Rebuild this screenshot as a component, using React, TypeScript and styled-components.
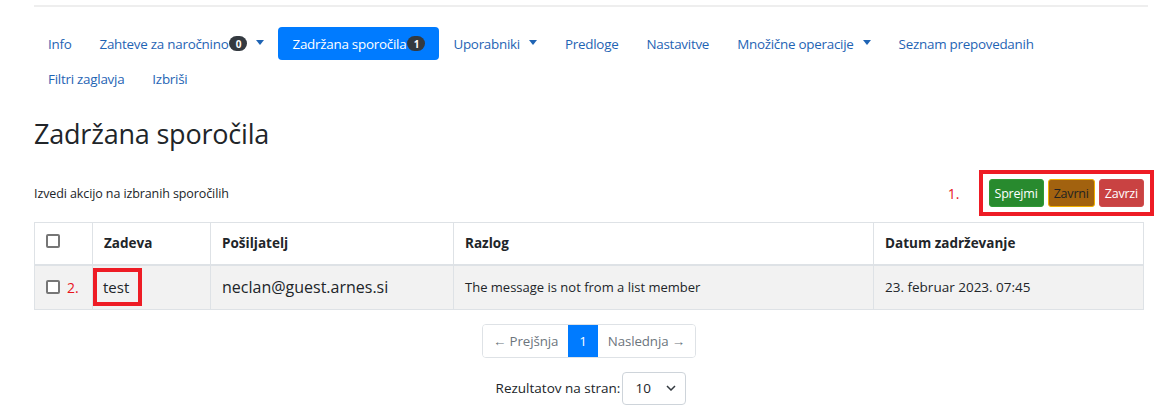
import React from "react";
import styled, { createGlobalStyle } from "styled-components";

const GlobalStyle = createGlobalStyle`
  body {
    margin: 0;
    background: #fff;
    font-family: "Open Sans", "Noto Sans", Arial, sans-serif;
    color: #212529;
  }
`;

const Page = styled.div`
  padding: 0 28px 0 34px;
`;

const TopRule = styled.div`
  height: 5px;
  border-bottom: 2px solid #eeeeee;
  margin-right: -4px;
`;

const Nav = styled.ul`
  display: flex;
  flex-wrap: wrap;
  list-style: none;
  margin: 0;
  padding: 20px 0 0;
  row-gap: 2px;
`;

const NavLink = styled.a<{ $active?: boolean }>`
  display: flex;
  align-items: center;
  height: 33px;
  padding: 0 14px;
  border-radius: 4px;
  font-size: 13.4px;
  letter-spacing: -0.25px;
  text-decoration: none;
  color: ${(p) => (p.$active ? "#fff" : "#1f64b4")};
  background: ${(p) => (p.$active ? "#007bff" : "transparent")};
`;

const Badge = styled.span`
  display: inline-flex;
  align-items: center;
  justify-content: center;
  min-width: 18px;
  height: 15px;
  border-radius: 8px;
  background: #343a40;
  color: #fff;
  font-size: 10px;
  font-weight: 700;
  margin-left: 1px;
`;

const Caret = styled.span`
  display: inline-block;
  margin-left: 9px;
  border-top: 5px solid currentColor;
  border-left: 4px solid transparent;
  border-right: 4px solid transparent;
  transform: translateY(-1px);
`;

const Title = styled.h2`
  margin: 21px 0 0;
  font-size: 27px;
  font-weight: 400;
  line-height: 36px;
  letter-spacing: -0.2px;
`;

const ActionBar = styled.div`
  display: flex;
  align-items: center;
  justify-content: space-between;
  margin-top: 18px;
  margin-right: -10px;
`;

const Hint = styled.p`
  margin: 0;
  font-size: 12.5px;
  letter-spacing: -0.1px;
`;

const Actions = styled.div`
  display: flex;
  align-items: center;
  gap: 19px;
`;

const Marker = styled.span`
  color: #e8141c;
  font-size: 14px;
`;

const Highlight = styled.div`
  display: flex;
  gap: 4px;
  padding: 5px 6px;
  border: 4px solid #ee1c25;
`;

const ActionButton = styled.button<{ $bg: string; $border: string; $fg: string }>`
  height: 28px;
  padding: 0 5px;
  border-radius: 3px;
  border: 1px solid ${(p) => p.$border};
  background: ${(p) => p.$bg};
  color: ${(p) => p.$fg};
  font-family: inherit;
  font-size: 12.5px;
  letter-spacing: -0.2px;
`;

const Table = styled.table`
  width: 100%;
  margin-top: 6px;
  table-layout: fixed;
  border-collapse: collapse;
  font-size: 13px;
`;

const Th = styled.th<{ $w?: number }>`
  box-sizing: border-box;
  width: ${(p) => (p.$w ? `${p.$w}px` : "auto")};
  height: 42px;
  padding: 0 11px;
  text-align: left;
  font-weight: 700;
  font-size: 13.5px;
  border: 1px solid #dee2e6;
  border-bottom-width: 2px;
`;

const Row = styled.tr`
  background: #f2f2f2;
`;

const Td = styled.td<{ $size?: number }>`
  height: 43px;
  padding: 0 11px;
  font-size: ${(p) => p.$size ?? 13}px;
  border: 1px solid #dee2e6;
  white-space: nowrap;
`;

const CheckCell = styled.div`
  display: flex;
  align-items: center;
  gap: 7px;
`;

const Check = styled.span`
  display: inline-block;
  width: 10px;
  height: 10px;
  border: 2px solid #767676;
  border-radius: 2px;
  background: #fff;
`;

const Subject = styled.span`
  display: inline-block;
  margin-left: -11px;
  padding: 5px 9px 5px 6px;
  border: 4px solid #ee1c25;
  font-size: 15px;
`;

const Pager = styled.div`
  display: flex;
  justify-content: center;
  margin-top: 14px;
`;

const PageGroup = styled.div`
  display: flex;
  border: 1px solid #dee2e6;
  border-radius: 4px;
  overflow: hidden;
  height: 32px;
`;

const PageItem = styled.span<{ $active?: boolean }>`
  display: flex;
  align-items: center;
  padding: 0 ${(p) => (p.$active ? 11 : 10)}px;
  font-size: 13.3px;
  letter-spacing: -0.1px;
  color: ${(p) => (p.$active ? "#fff" : "#6c757d")};
  background: ${(p) => (p.$active ? "#007bff" : "#fff")};
`;

const PerPage = styled.div`
  display: flex;
  justify-content: center;
  align-items: center;
  margin-top: 14px;
  padding-left: 4px;
  font-size: 13.5px;
`;

const Select = styled.div`
  display: flex;
  align-items: center;
  justify-content: space-between;
  width: 64px;
  height: 33px;
  box-sizing: border-box;
  padding: 0 9px 0 12px;
  margin-left: 2px;
  border: 1px solid #ced4da;
  border-radius: 4px;
`;

const navItems: { label: string; badge?: string; caret?: boolean; active?: boolean }[] = [
  { label: "Info" },
  { label: "Zahteve za naročnino", badge: "0", caret: true },
  { label: "Zadržana sporočila", badge: "1", active: true },
  { label: "Uporabniki", caret: true },
  { label: "Predloge" },
  { label: "Nastavitve" },
  { label: "Množične operacije", caret: true },
  { label: "Seznam prepovedanih" },
  { label: "Filtri zaglavja" },
  { label: "Izbriši" },
];

const App: React.FC = () => {
  return (
    <Page>
      <GlobalStyle />
      <TopRule />
      <Nav>
        {navItems.map((item) => (
          <li key={item.label}>
            <NavLink $active={item.active}>
              {item.label}
              {item.badge && <Badge>{item.badge}</Badge>}
              {item.caret && <Caret />}
            </NavLink>
          </li>
        ))}
      </Nav>
      <Title>Zadržana sporočila</Title>
      <ActionBar>
        <Hint>Izvedi akcijo na izbranih sporočilih</Hint>
        <Actions>
          <Marker>1.</Marker>
          <Highlight>
            <ActionButton $bg="#288a2e" $border="#2f9a36" $fg="#fff">
              Sprejmi
            </ActionButton>
            <ActionButton $bg="#a2620f" $border="#f0b000" $fg="#222">
              Zavrni
            </ActionButton>
            <ActionButton $bg="#c94242" $border="#cf4b4b" $fg="#fff">
              Zavrzi
            </ActionButton>
          </Highlight>
        </Actions>
      </ActionBar>
      <Table>
        <thead>
          <tr>
            <Th $w={58}>
              <Check />
            </Th>
            <Th $w={118}>Zadeva</Th>
            <Th $w={243}>Pošiljatelj</Th>
            <Th $w={420}>Razlog</Th>
            <Th>Datum zadrževanje</Th>
          </tr>
        </thead>
        <tbody>
          <Row>
            <Td>
              <CheckCell>
                <Check />
                <Marker>2.</Marker>
              </CheckCell>
            </Td>
            <Td>
              <Subject>test</Subject>
            </Td>
            <Td $size={16}>neclan@guest.arnes.si</Td>
            <Td>The message is not from a list member</Td>
            <Td $size={13.5}>23. februar 2023. 07:45</Td>
          </Row>
        </tbody>
      </Table>
      <Pager>
        <PageGroup>
          <PageItem>← Prejšnja</PageItem>
          <PageItem $active>1</PageItem>
          <PageItem>Naslednja →</PageItem>
        </PageGroup>
      </Pager>
      <PerPage>
        Rezultatov na stran:
        <Select>
          <span>10</span>
          <svg width="10" height="6" viewBox="0 0 10 6">
            <path d="M1 1l4 4 4-4" fill="none" stroke="#343a40" strokeWidth="1.5" />
          </svg>
        </Select>
      </PerPage>
    </Page>
  );
};

export default App;
